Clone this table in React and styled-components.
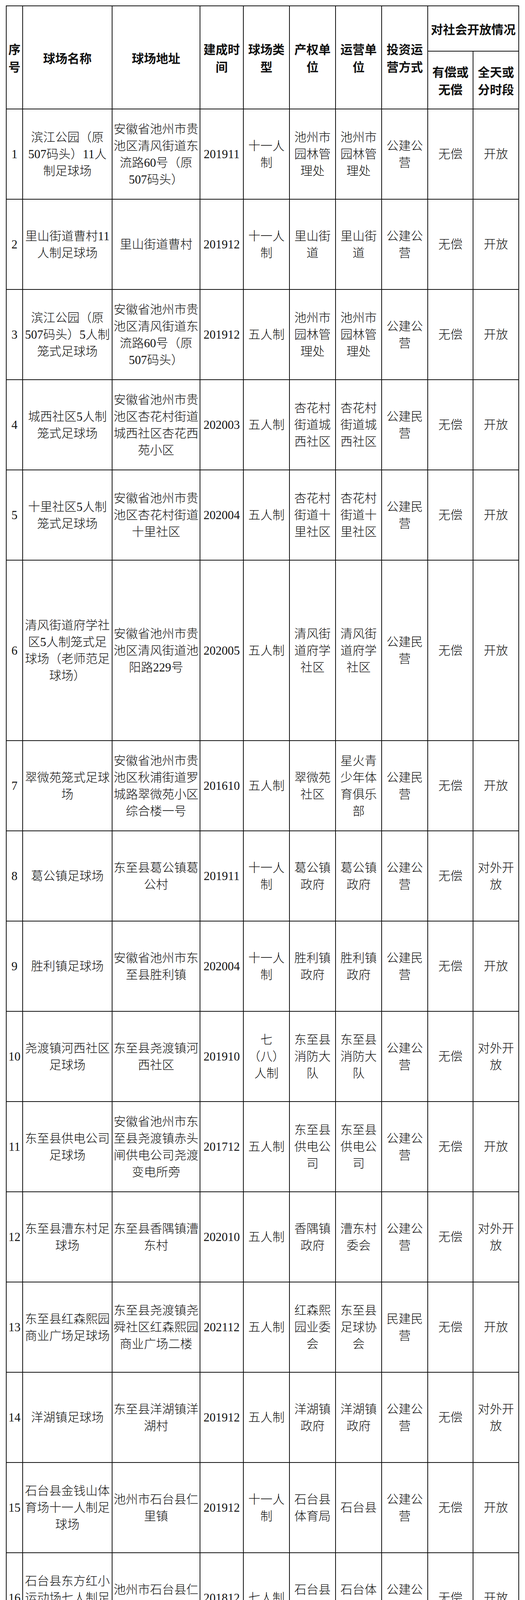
import React from "react";
import styled, { createGlobalStyle } from "styled-components";

const GlobalStyle = createGlobalStyle`
  html, body {
    margin: 0;
    padding: 0;
    background: #ffffff;
  }
`

const Page = styled.div`
  padding: 14px 0 32px 15px;
  background: #ffffff;
`

const Sheet = styled.table`
  border-collapse: collapse;
  table-layout: fixed;
  width: 1312px;
  font-family: "Liberation Serif", "Noto Sans CJK SC", serif;
  color: #111111;
`

const Col = styled.col`
  width: ${(p) => p.$w}px;
`

const HeadRow = styled.tr`
  height: ${(p) => p.$h}px;
`

const Row = styled.tr`
  height: ${(p) => (p.$tall ? 462 : 231)}px;
`

const HeadCell = styled.th`
  border: 2px solid #111111;
  padding: 0 2px;
  font-family: "Noto Sans CJK SC", sans-serif;
  font-weight: 700;
  font-size: 31px;
  line-height: 45px;
  text-align: center;
  vertical-align: middle;
`

const Cell = styled.td`
  border: 2px solid #111111;
  padding: 0 2px;
  font-weight: 300;
  font-size: 31px;
  line-height: 43px;
  text-align: center;
  vertical-align: middle;
`

const Line = styled.span`
  display: block;
  white-space: nowrap;
`

const widths = [42, 229, 225, 111, 118, 118, 118, 118, 116, 117];

// 序号 | 名称 | 地址 | 时间 | 类型 | 产权 | 运营 | 投资 | 有偿 | 开放
const rows = [
  ["1", "滨江公园（原/507码头）11人/制足球场", "安徽省池州市贵/池区清风街道东/流路60号（原/507码头）", "201911", "十一人/制", "池州市/园林管/理处", "池州市/园林管/理处", "公建公/营", "无偿", "开放"],
  ["2", "里山街道曹村11/人制足球场", "里山街道曹村", "201912", "十一人/制", "里山街/道", "里山街/道", "公建公/营", "无偿", "开放"],
  ["3", "滨江公园（原/507码头）5人制/笼式足球场", "安徽省池州市贵/池区清风街道东/流路60号（原/507码头）", "201912", "五人制", "池州市/园林管/理处", "池州市/园林管/理处", "公建公/营", "无偿", "开放"],
  ["4", "城西社区5人制/笼式足球场", "安徽省池州市贵/池区杏花村街道/城西社区杏花西/苑小区", "202003", "五人制", "杏花村/街道城/西社区", "杏花村/街道城/西社区", "公建民/营", "无偿", "开放"],
  ["5", "十里社区5人制/笼式足球场", "安徽省池州市贵/池区杏花村街道/十里社区", "202004", "五人制", "杏花村/街道十/里社区", "杏花村/街道十/里社区", "公建民/营", "无偿", "开放"],
  ["6", "清风街道府学社/区5人制笼式足/球场（老师范足/球场）", "安徽省池州市贵/池区清风街道池/阳路229号", "202005", "五人制", "清风街/道府学/社区", "清风街/道府学/社区", "公建民/营", "无偿", "开放", true],
  ["7", "翠微苑笼式足球/场", "安徽省池州市贵/池区秋浦街道罗/城路翠微苑小区/综合楼一号", "201610", "五人制", "翠微苑/社区", "星火青/少年体/育俱乐/部", "公建民/营", "无偿", "开放"],
  ["8", "葛公镇足球场", "东至县葛公镇葛/公村", "201911", "十一人/制", "葛公镇/政府", "葛公镇/政府", "公建公/营", "无偿", "对外开/放"],
  ["9", "胜利镇足球场", "安徽省池州市东/至县胜利镇", "202004", "十一人/制", "胜利镇/政府", "胜利镇/政府", "公建民/营", "无偿", "开放"],
  ["10", "尧渡镇河西社区/足球场", "东至县尧渡镇河/西社区", "201910", "七/（八）/人制", "东至县/消防大/队", "东至县/消防大/队", "公建公/营", "无偿", "对外开/放"],
  ["11", "东至县供电公司/足球场", "安徽省池州市东/至县尧渡镇赤头/闸供电公司尧渡/变电所旁", "201712", "五人制", "东至县/供电公/司", "东至县/供电公/司", "公建公/营", "无偿", "开放"],
  ["12", "东至县漕东村足/球场", "东至县香隅镇漕/东村", "202010", "五人制", "香隅镇/政府", "漕东村/委会", "公建公/营", "无偿", "对外开/放"],
  ["13", "东至县红森熙园/商业广场足球场", "东至县尧渡镇尧/舜社区红森熙园/商业广场二楼", "202112", "五人制", "红森熙/园业委/会", "东至县/足球协/会", "民建民/营", "无偿", "开放"],
  ["14", "洋湖镇足球场", "东至县洋湖镇洋/湖村", "201912", "五人制", "洋湖镇/政府", "洋湖镇/政府", "公建公/营", "无偿", "对外开/放"],
  ["15", "石台县金钱山体/育场十一人制足/球场", "池州市石台县仁/里镇", "201912", "十一人/制", "石台县/体育局", "石台县", "公建公/营", "无偿", "开放"],
  ["16", "石台县东方红小/运动场七人制足/球场", "池州市石台县仁/里镇", "201812", "七人制", "石台县/体育局", "石台体/育局", "公建公/营", "无偿", "开放"],
  ["17", "青阳县公共体育/场足球场", "安徽省青阳县蓉/城镇蓉溪北路", "201710", "十一人/制", "青阳县/教育体/育局", "青阳县/教育体/育局", "公建公/营", "无偿", "开放"],
  ["18", "青阳县省级全民/健身广场", "安徽省池州市青/阳县蓉城镇西峰/路200号", "202005", "十一人/制", "青阳县/教育体/育局", "青阳县/教育体/育局", "公建民/营", "无偿", "开放"],
  ["19", "青阳县木镇北河/路足球场", "安徽省青阳县木/镇镇北河路", "201712", "七人制", "木镇镇/人民政/府", "木镇镇/人民政/府", "公建公/营", "无偿", "开放"],
  ["20", "青阳县南部新城/公共体育场", "青阳县新城区临/城南路和化成路/交口西北方向", "202007", "七人制", "青阳县/教育体/育局", "青阳县/教育体/育局", "公建公/营", "无偿", "开放"],
  ["21", "陵阳镇公共足球/场", "安徽省青阳县陵/阳镇", "201612", "七人制", "陵阳镇/人民政/府", "陵阳镇/人民政/府", "公建公/营", "无偿", "开放"],
  ["22", "东河体育公园足/球场", "青阳县东河体育/公园", "202304", "五人制", "青阳县/教体局", "青阳县/教体局", "公建公/营", "无偿", "开放"],
  ["23", "池州开发区流坡/社区足球场", "池州市开发区流/坡社区", "201912", "五人制", "池州开/发区管/委会", "开发区/应急管/理局", "公建公/营", "有偿", "对外开/放"],
  ["24", "平天湖5人制足/球场", "池州市平天湖风/景区湿地公园", "202003", "五人制", "平天湖/风景区", "平天湖/风景区/管委会", "公建公/营", "无偿", "开放", true],
  ["25", "96711部队足球/场", "贵池区秋浦路18/号", "201912", "五人制", "96711部/队", "96711部/队", "公建公/营", "无偿", "开放"],
  ["26", "三友足球场", "安徽省池州市贵/池区涓桥镇三友/村", "202010", "五人制", "涓桥镇", "涓桥镇/三友村", "公建公/营", "无偿", "开放"],
];

const Lines = ({ text }) => (
  <>
    {text.split("/").map((t, i) => (
      <Line key={i}>{t}</Line>
    ))}
  </>
);

const App = () => {
  return (
    <Page>
      <GlobalStyle />
      <Sheet>
        <colgroup>
          {widths.map((w, i) => (
            <Col key={i} $w={w} />
          ))}
        </colgroup>
        <thead>
          <HeadRow $h={116}>
            <HeadCell rowSpan={2}><Lines text="序/号" /></HeadCell>
            <HeadCell rowSpan={2}><Lines text="球场名称" /></HeadCell>
            <HeadCell rowSpan={2}><Lines text="球场地址" /></HeadCell>
            <HeadCell rowSpan={2}><Lines text="建成时/间" /></HeadCell>
            <HeadCell rowSpan={2}><Lines text="球场类/型" /></HeadCell>
            <HeadCell rowSpan={2}><Lines text="产权单/位" /></HeadCell>
            <HeadCell rowSpan={2}><Lines text="运营单/位" /></HeadCell>
            <HeadCell rowSpan={2}><Lines text="投资运/营方式" /></HeadCell>
            <HeadCell colSpan={2}><Lines text="对社会开放情况" /></HeadCell>
          </HeadRow>
          <HeadRow $h={148}>
            <HeadCell><Lines text="有偿或/无偿" /></HeadCell>
            <HeadCell><Lines text="全天或/分时段" /></HeadCell>
          </HeadRow>
        </thead>
        <tbody>
          {rows.map((r) => (
            <Row key={r[0]} $tall={r[10]}>
              {r.slice(0, 10).map((c, i) => (
                <Cell key={i}><Lines text={c} /></Cell>
              ))}
            </Row>
          ))}
        </tbody>
      </Sheet>
    </Page>
  );
}

export default App;
